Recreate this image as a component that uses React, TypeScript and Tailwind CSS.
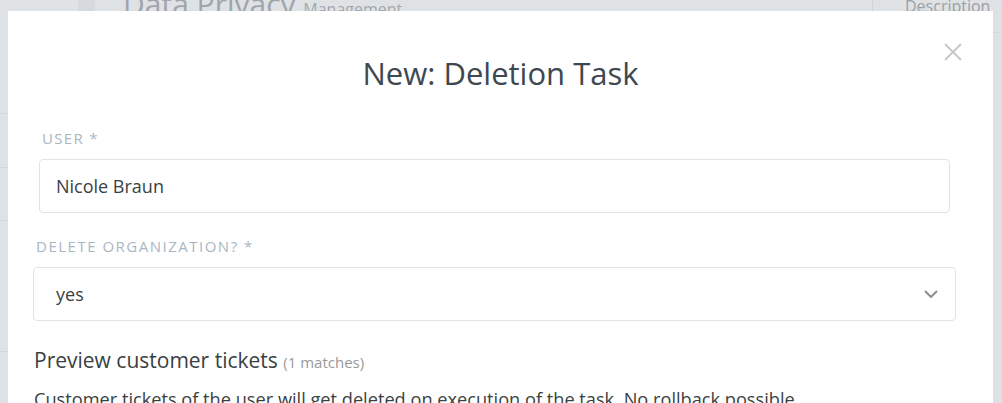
import React from "react";

export default function App() {
  const font = { fontFamily: '"Open Sans", "Noto Sans", sans-serif' };
  return (
    <div className="relative w-[1002px] h-[403px] overflow-hidden bg-[#dcdfe2]" style={font}>
      {/* background page */}
      <div className="flex h-full">
        <div className="w-[78px] bg-[#e0e3e6] flex flex-col">
          <div className="h-[114px] border-b border-[#d4d7db]"></div>
          <div className="h-[54px] border-b border-[#d4d7db]"></div>
          <div className="h-[53px] border-b border-[#d4d7db]"></div>
          <div className="h-[131px] border-b border-[#d4d7db]"></div>
        </div>
        <div className="w-[17px] bg-[#d6d9dd]"></div>
        <div className="flex-1 flex flex-col bg-[#dfe2e5]">
          <div className="h-[33px] flex relative border-b border-[#d6d9dc]">
            <div className="pl-[28px] -mt-[16px] text-[30px] leading-[40px] text-[#a0a5ab] whitespace-nowrap">
              Data Privacy <span className="text-[16px] text-[#a3a8ae]">Management</span>
            </div>
            <div className="ml-auto flex h-full">
              <div className="w-px bg-[#d0d3d7]"></div>
              <div className="pl-[32px] text-[16px] text-[#9aa0a6] leading-[20px] -mt-[4px] whitespace-nowrap w-[129px]">Description</div>
            </div>
          </div>
        </div>
      </div>

      {/* modal */}
      <div className="absolute left-[8px] top-[11px] w-[985px] h-[420px] bg-white">
        <button className="absolute left-[936px] top-[32px] w-[18px] h-[18px] text-[#c6c6c6]">
          <svg viewBox="0 0 18 18" width="18" height="18" fill="none" stroke="currentColor" strokeWidth="1.8">
            <path d="M1 1 L17 17 M17 1 L1 17" />
          </svg>
        </button>
        <h1 className="pt-[44px] text-center text-[31px] leading-[36px] text-[#3d4851]">New: Deletion Task</h1>
        <div className="pl-[25px] pr-[37px] pt-[37px]">
          <div className="mx-[6px]">
            <div className="pl-[3px] text-[15px] tracking-[1.3px] text-[#a9b7c1] leading-[20px]">USER *</div>
            <div className="mt-[11px] h-[54px] rounded-[4px] border border-[#e3e3e3] flex items-center px-[16px] text-[18px] text-[#3b3f42]">
              Nicole Braun
            </div>
          </div>
          <div className="mt-[23px]">
            <div className="pl-[3px] text-[15px] tracking-[1.5px] text-[#a9b7c1] leading-[20px]">DELETE ORGANIZATION? *</div>
            <div className="mt-[11px] h-[54px] rounded-[4px] border border-[#e3e3e3] flex items-center pl-[22px] pr-[17px] text-[18px] text-[#3b3f42]">
              <span className="flex-1">yes</span>
              <svg viewBox="0 0 14 8" width="14" height="8" fill="none" stroke="#8f8f8f" strokeWidth="2">
                <path d="M1 1 L7 7 L13 1" />
              </svg>
            </div>
          </div>
          <div className="mt-[25px] text-[21px] leading-[28px] text-[#3a3f44] pl-[1px]">
            Preview customer tickets <span className="text-[15px] text-[#9a9a9a]">(1 matches)</span>
          </div>
          <p className="mt-[11px] text-[18.2px] leading-[24px] text-[#3b3f42] pl-[1px] whitespace-nowrap">
            Customer tickets of the user will get deleted on execution of the task. No rollback possible.
          </p>
        </div>
      </div>
    </div>
  );
}
